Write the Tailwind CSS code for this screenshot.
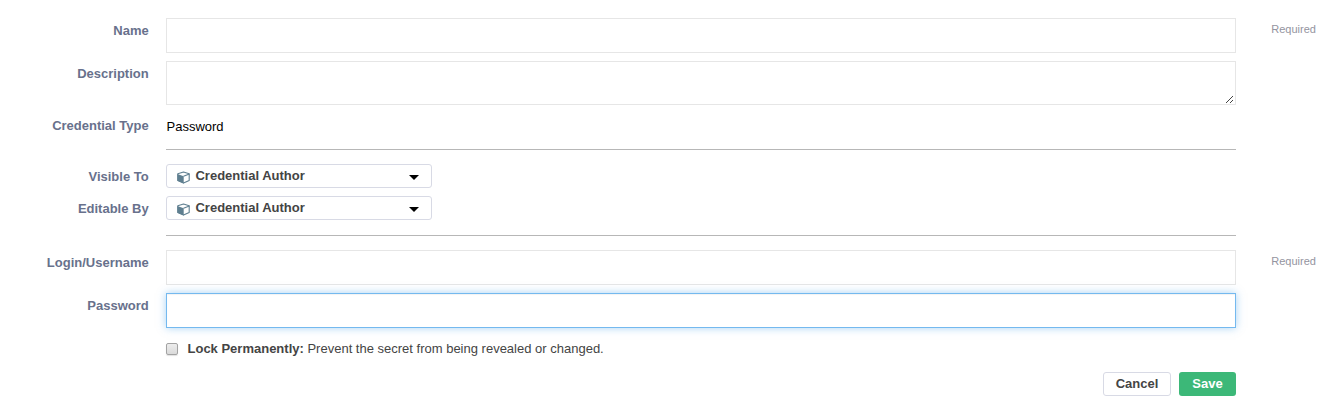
<!DOCTYPE html>
<html lang="en">
<head>
<meta charset="utf-8">
<title>Credential</title>
<script src="https://cdn.jsdelivr.net/npm/@tailwindcss/browser@4"></script>
</head>
<body class="bg-white font-['Liberation_Sans',Arial,sans-serif] text-[13px] leading-4 text-[#444]">
<svg class="hidden">
  <symbol id="cube" viewBox="0 0 13 13">
    <path d="M6.5 1 12.2 2.8v6.7L6.5 12.1.8 9.5V2.8z" fill="#fff" stroke="#5f7f90" stroke-width="1.1" stroke-linejoin="round"/>
    <path d="M.4 2.9 6.7 5.3v7.3L.4 9.8z" fill="#5f7f90"/>
    <path d="M6.5 5.3 12.4 3" stroke="#5f7f90" stroke-width="1.1" fill="none"/>
  </symbol>
</svg>
<form class="flex flex-col pt-[18px]">
  <div class="flex h-[35px] mb-2">
    <label class="w-[148.7px] mr-[17.3px] pt-[5px] text-right font-bold text-[#68718c]">Name</label>
    <input type="text" class="w-[1070px] border border-[#e6e6e6] outline-none">
    <span class="ml-[35.3px] pt-[3px] text-[11px] text-[#9494a0]">Required</span>
  </div>
  <div class="flex h-11 mb-[13px]">
    <label class="w-[148.7px] mr-[17.3px] pt-[5px] text-right font-bold text-[#68718c]">Description</label>
    <div class="relative w-[1070px] h-11">
      <textarea class="block w-full h-11 border border-[#e6e6e6] outline-none resize-none"></textarea>
      <svg class="absolute right-[3px] bottom-[2px] w-[7px] h-[7px]" viewBox="0 0 7 7" shape-rendering="crispEdges" fill="#444"><path d="M0 6h1v1H0zM1 5h1v1H1zM2 4h1v1H2zM3 3h1v1H3zM4 2h1v1H4zM5 1h1v1H5zM6 0h1v1H6zM4 6h1v1H4zM5 5h1v1H5zM6 4h1v1H6z"/></svg>
    </div>
  </div>
  <div class="flex h-[31px]">
    <label class="w-[148.7px] mr-[17.3px] text-right font-bold text-[#68718c]">Credential Type</label>
    <div class="w-[1070px] pt-px pl-[0.5px] text-black">Password</div>
  </div>
  <hr class="ml-[166px] w-[1070px] border-[#b7b7b7] mb-[14px]">
  <div class="flex h-6 mb-2">
    <label class="w-[148.7px] mr-[17.3px] pt-[5px] text-right font-bold text-[#68718c]">Visible To</label>
    <button type="button" class="flex w-[266px] h-6 rounded-[3px] border border-[#d8dae5] pl-[10px] pr-3 font-bold">
      <svg class="w-[13px] h-[13px] mt-[6px] mr-[5.5px]"><use href="#cube"/></svg>
      <span class="mt-[3px]">Credential Author</span>
      <svg class="w-[10px] h-[5px] mt-[10px] ml-auto" viewBox="0 0 10 5"><path d="M0 0h10L5 5z" fill="#000"/></svg>
    </button>
  </div>
  <div class="flex h-6 mb-[15px]">
    <label class="w-[148.7px] mr-[17.3px] pt-[5px] text-right font-bold text-[#68718c]">Editable By</label>
    <button type="button" class="flex w-[266px] h-6 rounded-[3px] border border-[#d8dae5] pl-[10px] pr-3 font-bold">
      <svg class="w-[13px] h-[13px] mt-[6px] mr-[5.5px]"><use href="#cube"/></svg>
      <span class="mt-[3px]">Credential Author</span>
      <svg class="w-[10px] h-[5px] mt-[10px] ml-auto" viewBox="0 0 10 5"><path d="M0 0h10L5 5z" fill="#000"/></svg>
    </button>
  </div>
  <hr class="ml-[166px] w-[1070px] border-[#b7b7b7] mb-[14px]">
  <div class="flex h-[35px] mb-2">
    <label class="w-[148.7px] mr-[17.3px] pt-[5px] text-right font-bold text-[#68718c]">Login/Username</label>
    <input type="text" class="w-[1070px] border border-[#e6e6e6] outline-none">
    <span class="ml-[35.3px] pt-[3px] text-[11px] text-[#9494a0]">Required</span>
  </div>
  <div class="flex h-[35px] mb-3">
    <label class="w-[148.7px] mr-[17.3px] pt-[5px] text-right font-bold text-[#68718c]">Password</label>
    <input type="password" class="w-[1070px] border border-[#74b9ef] outline-none shadow-[0_0_8px_rgba(82,168,236,0.5),inset_0_1px_1px_rgba(0,0,0,0.05)]">
  </div>
  <label class="flex h-4 ml-[166px] mb-4">
    <input type="checkbox" class="appearance-none w-3 h-3 mt-[3px] mr-[9.5px] rounded-[2px] border border-[#a3a3a3] bg-linear-to-b from-[#ededed] to-[#dadada] shadow-[0_1px_1px_rgba(0,0,0,0.12)]">
    <span class="mt-px"><b>Lock Permanently:</b> Prevent the secret from being revealed or changed.</span>
  </label>
  <div class="flex justify-end gap-2 w-[1236px]">
    <button type="button" class="w-[68px] h-6 rounded-[3px] border border-[#d8dae5] pb-px font-bold">Cancel</button>
    <button type="submit" class="w-[57px] h-6 rounded-[3px] bg-[#3cb878] pb-px font-bold text-white">Save</button>
  </div>
</form>
</body>
</html>
